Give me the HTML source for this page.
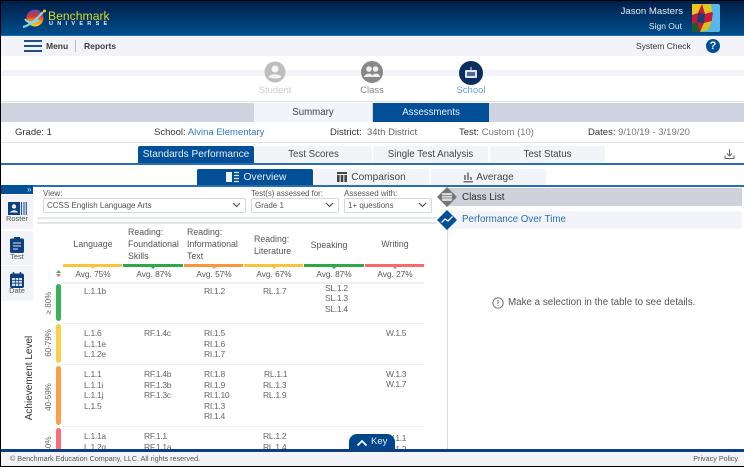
<!DOCTYPE html>
<html lang="en"><head><meta charset="utf-8"><title>Benchmark Universe</title>
<style>
html,body{margin:0;padding:0;background:#fff}
#p{position:relative;width:744px;height:467px;overflow:hidden;background:#fff;font-family:"Liberation Sans",sans-serif;font-size:9px;color:#444;filter:blur(.35px)}
#p div,#p svg{position:absolute}
.t{white-space:nowrap;line-height:12px;height:12px}
.c{text-align:center;transform:translateX(-50%)}
.s{font-size:8.5px;color:#666;letter-spacing:-.3px}
.tab{background:#f3f4fa;text-align:center;color:#444;font-size:9.7px;line-height:17px;border-radius:2px 2px 0 0}
.on{background:#004f97;color:#e8eef6}
.sel{background:#fff;border:1px solid #d5d7dc;border-radius:2px;height:13px;line-height:13px;font-size:8px;color:#555;padding-left:3px;box-sizing:content-box}
.side{left:1px;width:32px;background:#f3f4fa}
.bar{left:56px;width:5px;border-radius:2.5px}
.u{top:264px;height:2.5px;width:59px}
.sep{left:62px;width:362px;height:1px;background:#eef0f6}
.rot{font-size:8px;color:#666;letter-spacing:0}
</style></head><body><div id="p">

<!-- header -->
<div style="left:0;top:0;width:744px;height:36px;background:linear-gradient(#001d47,#00508f)"></div>
<div style="left:0;top:35px;width:744px;height:1px;background:#1c6cb4"></div>
<svg style="left:22px;top:7px" width="26" height="22" viewBox="0 0 26 22">
<defs><linearGradient id="pl" x1="0" y1="0" x2="0" y2="1"><stop offset="0" stop-color="#5a4fa8"/><stop offset=".4" stop-color="#d8362e"/><stop offset=".7" stop-color="#f29a1e"/><stop offset="1" stop-color="#f5d020"/></linearGradient></defs>
<circle cx="13" cy="11" r="8.5" fill="url(#pl)"/>
<path d="M1 20C6 19 13 14 21 5" stroke="#7fd0ee" stroke-width="2.4" fill="none"/>
<path d="M3 12C6 17 12 16 17 13" stroke="#8fd8ee" stroke-width="1.8" fill="none"/>
<circle cx="22.5" cy="4" r="1.5" fill="#f5d020"/>
</svg>
<div class="t" style="left:48px;top:9px;font-size:12.2px;color:#dcd41e;line-height:14px">Benchmark</div>
<div class="t" style="left:49px;top:18px;font-size:5.5px;font-weight:bold;color:#e8eef4;letter-spacing:4.3px">UNIVERSE</div>

<div class="t" style="right:61px;top:6px;font-size:9.6px;color:#e6edf5">Jason Masters</div>
<div class="t" style="right:62px;top:20px;font-size:8.5px;color:#dfe7f1">Sign Out</div>
<svg style="left:692px;top:4px" width="28" height="28" viewBox="0 0 28 28">
<rect width="28" height="28" rx="2" fill="#58b7ea"/>
<path d="M0 0H17L21 10 17 24 8 28H0Z" fill="#c8183c"/>
<path d="M0 0H10L6 9 0 11Z" fill="#e8c81c"/>
<path d="M10 0H19L20 8 13 10Z" fill="#e3c61d"/>
<path d="M6 9 13 10 12 19 5 18Z" fill="#1c3f6e"/>
<path d="M13 10 20 8 20 17 12 19Z" fill="#c8183c"/>
<path d="M0 20 5 18 8 28H0Z" fill="#1f5a2c"/>
<path d="M12 19 20 17 16 26 8 28Z" fill="#d8c21a"/>
</svg>

<!-- nav -->
<div style="left:0;top:36px;width:744px;height:20px;background:#f3f4fa"></div>
<div style="left:24px;top:40px;width:18px;height:2px;background:#1b4f8f"></div>
<div style="left:24px;top:45px;width:18px;height:2px;background:#1b4f8f"></div>
<div style="left:24px;top:50px;width:18px;height:2px;background:#1b4f8f"></div>
<div class="t" style="left:46px;top:40px;font-size:8.5px;color:#3a3a3a;font-weight:bold">Menu</div>
<div style="left:75px;top:40px;width:1px;height:12px;background:#bbb"></div>
<div class="t" style="left:84px;top:40px;font-size:8.5px;color:#3a3a3a;font-weight:bold">Reports</div>
<div class="t" style="left:636px;top:40px;font-size:8.5px;color:#333">System Check</div>
<div style="left:706px;top:39px;width:14px;height:14px;border-radius:50%;background:#004f97;color:#fff;font-size:11px;font-weight:bold;line-height:14px;text-align:center">?</div>

<!-- stepper -->
<div style="left:0;top:70px;width:744px;height:6px;background:#f3f4fa"></div>
<svg style="left:264px;top:61px" width="22" height="22" viewBox="0 0 22 22"><circle cx="11" cy="11" r="10.5" fill="#bdbdbd"/><circle cx="11" cy="8" r="3.5" fill="#f4f4f4"/><path d="M4.5 16C5.5 12.5 16.5 12.5 17.5 16 15 18 7 18 4.5 16Z" fill="#f4f4f4"/></svg>
<div class="t c" style="left:275px;top:85px;color:#ccc;font-size:9.5px">Student</div>
<svg style="left:361px;top:61px" width="22" height="22" viewBox="0 0 22 22"><circle cx="11" cy="11" r="11" fill="#888"/><circle cx="8" cy="8" r="2.8" fill="#eee"/><circle cx="14.5" cy="8" r="2.8" fill="#eee"/><path d="M3 16C4 11.5 12 11.5 12 16Z" fill="#eee"/><path d="M11 16C11 11.5 19 11.5 19 16Z" fill="#eee"/></svg>
<div class="t c" style="left:372px;top:85px;color:#888;font-size:9.5px">Class</div>
<svg style="left:459px;top:61px" width="24" height="24" viewBox="0 0 24 24"><circle cx="12" cy="12" r="12" fill="#0a2f5f"/><rect x="6" y="9" width="12" height="8" rx="1" fill="#dfe6f0"/><rect x="8" y="11" width="8" height="4" fill="#4d6c94"/><path d="M12 9V6" stroke="#dfe6f0" stroke-width="1"/></svg>
<div class="t c" style="left:471px;top:85px;color:#6fa3d4;font-size:9.5px">School</div>
<div style="left:0;top:101px;width:744px;height:1px;background:#dcdfe4"></div>

<!-- summary bar -->
<div style="left:0;top:103px;width:744px;height:19px;background:#cdd4df"></div>
<div class="tab" style="left:254px;top:103px;width:118px;height:19px;line-height:19px;border-radius:0">Summary</div>
<div class="tab on" style="left:373px;top:103px;width:116px;height:19px;line-height:19px;border-radius:0">Assessments</div>

<!-- info -->
<div class="t" style="left:15px;top:127px;font-size:9.5px;color:#333">Grade: 1</div>
<div class="t" style="left:154px;top:127px;font-size:9.5px;color:#333">School: <span style="color:#2f79bd">Alvina Elementary</span></div>
<div class="t" style="left:330px;top:127px;font-size:9.5px;color:#333">District: <span style="color:#666">&nbsp;34th District</span></div>
<div class="t" style="left:459px;top:127px;font-size:9.5px;color:#333">Test: <span style="color:#777">Custom (10)</span></div>
<div class="t" style="left:588px;top:127px;font-size:9.5px;color:#333">Dates: <span style="color:#777">9/10/19 - 3/19/20</span></div>
<div style="left:0;top:142px;width:744px;height:1px;background:#dfe3e8"></div>

<!-- tabs -->
<div class="tab on" style="left:138px;top:146px;width:116px;height:17px;font-size:10.1px">Standards Performance</div>
<div class="tab" style="left:255px;top:146px;width:117px;height:17px">Test Scores</div>
<div class="tab" style="left:373px;top:146px;width:115px;height:17px">Single Test Analysis</div>
<div class="tab" style="left:490px;top:146px;width:115px;height:17px">Test Status</div>
<svg style="left:723px;top:148px" width="13" height="13" viewBox="0 0 13 13" fill="none" stroke="#666" stroke-width="1"><path d="M6.5 1V8M4 5.5 6.5 8 9 5.5M2 7.5V10.5H11V7.5"/></svg>
<div style="left:0;top:163px;width:744px;height:1.5px;background:#2a70b0"></div>

<!-- subtabs -->
<div class="tab on" style="left:197px;top:169px;width:116px;height:16px;font-size:10.3px"><span style="margin-left:20px">Overview</span></div>
<div class="tab" style="left:314px;top:169px;width:115px;height:16px;font-size:10.1px"><span style="margin-left:14px">Comparison</span></div>
<div class="tab" style="left:431px;top:169px;width:115px;height:16px;font-size:10.1px"><span style="margin-left:13px">Average</span></div>
<svg style="left:225px;top:171px" width="16" height="12" viewBox="0 0 16 12"><rect x="1" y="1" width="6" height="10" fill="#eef2f8"/><path d="M9 1.5H14M9 4.5H14M9 7.5H14M9 10.5H14" stroke="#dfe7f1" stroke-width="1.2"/></svg>
<svg style="left:336px;top:171px" width="12" height="12" viewBox="0 0 12 12"><rect x="1" y="1" width="10" height="2" fill="#444"/><rect x="1" y="4" width="2.6" height="7" fill="#444"/><rect x="4.7" y="4" width="2.6" height="7" fill="#444"/><rect x="8.4" y="4" width="2.6" height="7" fill="#444"/></svg>
<svg style="left:463px;top:171px" width="11" height="12" viewBox="0 0 11 12"><path d="M2 4V9M5 1.5V9M8 6V9M0.5 10.8H10" stroke="#444" stroke-width="1.2"/></svg>
<div style="left:0;top:185px;width:744px;height:1.5px;background:#2a70b0"></div>

<!-- sidebar -->
<div style="left:1px;top:185px;width:32px;height:9px;background:#004f97"></div>
<div class="t" style="left:27px;top:184px;color:#cfe0f2;font-size:8px">»</div>
<div class="side" style="top:195px;height:34px"></div>
<svg style="left:8px;top:202px" width="19" height="13" viewBox="0 0 19 13"><rect width="12" height="13" fill="#0c3f7d"/><circle cx="6" cy="4.5" r="2.2" fill="#e8eef6"/><path d="M2 10.5C3 7.5 9 7.5 10 10.5Z" fill="#e8eef6"/><path d="M13.5 0V13M16 0V13M18.3 0V13" stroke="#2a5e9e" stroke-width="1.2"/></svg>
<div class="t c" style="left:17px;top:213px;font-size:7.5px;color:#555">Roster</div>
<div class="side" style="top:231px;height:34px"></div>
<svg style="left:10px;top:237px" width="14" height="16" viewBox="0 0 14 16"><rect y="1.5" width="14" height="14.5" rx="1.5" fill="#0c3f7d"/><rect x="4" width="6" height="3" fill="#0c3f7d"/><path d="M3 6H11M3 9H11M3 12H8" stroke="#dfe7f1" stroke-width="1.1"/></svg>
<div class="t c" style="left:17px;top:251px;font-size:7.5px;color:#555">Test</div>
<div class="side" style="top:266px;height:35px"></div>
<svg style="left:10px;top:272px" width="14" height="16" viewBox="0 0 14 16"><rect y="1.5" width="14" height="14.5" rx="2" fill="#0c3f7d"/><path d="M3.5 0V3M10.5 0V3" stroke="#0c3f7d" stroke-width="1.4"/><rect x="2" y="6" width="10" height="8" fill="#d8e2ef"/><path d="M2 8.5H12M2 11.2H12M5.3 6V14M8.7 6V14" stroke="#0c3f7d" stroke-width=".8"/></svg>
<div class="t c" style="left:17px;top:285px;font-size:7.5px;color:#555">Date</div>

<!-- filters -->
<div class="t" style="left:43px;top:188px;font-size:8px;color:#555">View:</div>
<div class="t" style="left:251px;top:188px;font-size:7.8px;color:#555">Test(s) assessed for:</div>
<div class="t" style="left:344px;top:188px;font-size:8px;color:#555">Assessed with:</div>
<div class="sel" style="left:43px;top:198px;width:198px">CCSS English Language Arts</div>
<div class="sel" style="left:251px;top:198px;width:83px">Grade 1</div>
<div class="sel" style="left:344px;top:198px;width:83px">1+ questions</div>
<svg style="left:232px;top:202px" width="9" height="6" viewBox="0 0 9 6"><path d="M1 1 4.5 4.5 8 1" stroke="#555" stroke-width="1.2" fill="none"/></svg>
<svg style="left:325px;top:202px" width="9" height="6" viewBox="0 0 9 6"><path d="M1 1 4.5 4.5 8 1" stroke="#555" stroke-width="1.2" fill="none"/></svg>
<svg style="left:418px;top:202px" width="9" height="6" viewBox="0 0 9 6"><path d="M1 1 4.5 4.5 8 1" stroke="#555" stroke-width="1.2" fill="none"/></svg>
<div style="left:37px;top:217px;width:400px;height:1.5px;background:#e3e6ec"></div>
<div style="left:37px;top:222px;width:400px;height:1.5px;background:#e3e6ec"></div>

<!-- right panel -->
<div style="left:447px;top:188px;width:295px;height:18px;background:#cdd2db"></div>
<div style="left:447px;top:211px;width:295px;height:18px;background:#f3f4fa"></div>
<div style="left:447px;top:229px;width:1px;height:221px;background:#d5dcea"></div>
<svg style="left:437px;top:187px" width="20" height="20" viewBox="0 0 20 20"><path d="M10 0 20 10 10 20 0 10Z" fill="#777"/><rect x="5" y="6" width="10" height="8" rx="1" fill="#d8dae0"/><path d="M5 8.5H15M5 11H15" stroke="#777" stroke-width=".7"/></svg>
<svg style="left:437px;top:210px" width="20" height="20" viewBox="0 0 20 20"><path d="M10 0 20 10 10 20 0 10Z" fill="#004f97"/><path d="M4.5 12.5 8 9 11 11 15.5 6.5" stroke="#fff" stroke-width="1.3" fill="none"/></svg>
<div class="t" style="left:462px;top:192px;font-size:9.8px;color:#2c2c2c">Class List</div>
<div class="t" style="left:462px;top:214px;font-size:9.8px;color:#2670b3">Performance Over Time</div>
<svg style="left:492px;top:297px" width="12" height="12" viewBox="0 0 12 12"><circle cx="6" cy="6" r="5.2" fill="none" stroke="#666" stroke-width=".9"/><path d="M6 3V6.8M6 8V9" stroke="#666" stroke-width="1"/></svg>
<div class="t" style="left:508px;top:297px;font-size:9.8px;color:#555">Make a selection in the table to see details.</div>

<!-- table headers -->
<div class="t c" style="left:93px;top:238px;font-size:8.8px;color:#555">Language</div>
<div class="t" style="left:128px;top:226px;font-size:8.8px;color:#555">Reading:</div>
<div class="t" style="left:128px;top:238px;font-size:8.8px;color:#555">Foundational</div>
<div class="t" style="left:128px;top:250px;font-size:8.8px;color:#555">Skills</div>
<div class="t" style="left:187px;top:226px;font-size:8.8px;color:#555">Reading:</div>
<div class="t" style="left:187px;top:238px;font-size:8.8px;color:#555">Informational</div>
<div class="t" style="left:187px;top:250px;font-size:8.8px;color:#555">Text</div>
<div class="t" style="left:254px;top:233px;font-size:8.8px;color:#555">Reading:</div>
<div class="t" style="left:254px;top:245px;font-size:8.8px;color:#555">Literature</div>
<div class="t c" style="left:329px;top:239px;font-size:8.8px;color:#555">Speaking</div>
<div class="t c" style="left:395px;top:238px;font-size:8.8px;color:#555">Writing</div>

<div class="u" style="left:63px;background:#f9c33c"></div>
<div class="u" style="left:123px;background:#2fa84a;width:60px"></div>
<div class="u" style="left:184px;background:#f9953f"></div>
<div class="u" style="left:244px;background:#f9c33c"></div>
<div class="u" style="left:304px;background:#2fa84a;width:60px"></div>
<div class="u" style="left:365px;background:#f56a6e"></div>
<svg style="left:63px;top:266px" width="362" height="4" viewBox="0 0 362 4"><path d="M27 0H33L30 3Z" fill="#f9c33c"/><path d="M87 0H93L90 3Z" fill="#2fa84a"/><path d="M148 0H154L151 3Z" fill="#f9953f"/><path d="M208 0H214L211 3Z" fill="#f9c33c"/><path d="M268 0H274L271 3Z" fill="#2fa84a"/><path d="M329 0H335L332 3Z" fill="#f56a6e"/></svg>

<svg style="left:56px;top:270px" width="5" height="7" viewBox="0 0 5 7"><path d="M2.5 0 5 3H0Z" fill="#3bb25a"/><path d="M0 4H5L2.5 7Z" fill="#f56a6e"/></svg>
<div class="t c" style="left:93px;top:268px;font-size:8.3px;color:#555">Avg. 75%</div>
<div class="t c" style="left:154px;top:268px;font-size:8.3px;color:#555">Avg. 87%</div>
<div class="t c" style="left:214px;top:268px;font-size:8.3px;color:#555">Avg. 57%</div>
<div class="t c" style="left:274px;top:268px;font-size:8.3px;color:#555">Avg. 67%</div>
<div class="t c" style="left:334px;top:268px;font-size:8.3px;color:#555">Avg. 87%</div>
<div class="t c" style="left:395px;top:268px;font-size:8.3px;color:#555">Avg. 27%</div>
<div class="sep" style="height:2px;top:282px"></div>
<div class="sep" style="top:323px"></div>
<div class="sep" style="top:364px"></div>
<div class="sep" style="top:426px"></div>

<!-- bars -->
<div class="bar" style="top:284px;height:37px;background:#3bb25a"></div>
<div class="bar" style="top:324px;height:39px;background:#fbcf45"></div>
<div class="bar" style="top:366px;height:59px;background:#fb9f4a"></div>
<div class="bar" style="top:428px;height:40px;background:#f5707a"></div>

<div class="t rot" style="left:49px;top:303px;transform:translate(-50%,-50%) rotate(-90deg)">≥ 80%</div>
<div class="t rot" style="left:49px;top:343px;transform:translate(-50%,-50%) rotate(-90deg)">60-79%</div>
<div class="t rot" style="left:49px;top:397px;transform:translate(-50%,-50%) rotate(-90deg)">40-59%</div>
<div class="t rot" style="left:49px;top:448px;transform:translate(-50%,-50%) rotate(-90deg)">&lt; 40%</div>
<div class="t" style="left:30px;top:378px;transform:translate(-50%,-50%) rotate(-90deg);font-size:10px;color:#333">Achievement Level</div>

<!-- cells -->
<div class="t s" style="left:84px;top:285px">L.1.1b</div>
<div class="t s" style="left:84px;top:327px">L.1.6</div>
<div class="t s" style="left:84px;top:338px">L.1.1e</div>
<div class="t s" style="left:84px;top:348px">L.1.2e</div>
<div class="t s" style="left:84px;top:368px">L.1.1</div>
<div class="t s" style="left:84px;top:379px">L.1.1i</div>
<div class="t s" style="left:84px;top:389px">L.1.1j</div>
<div class="t s" style="left:84px;top:400px">L.1.5</div>
<div class="t s" style="left:84px;top:430px">L.1.1a</div>
<div class="t s" style="left:84px;top:441px">L.1.2g</div>

<div class="t s" style="left:144px;top:327px">RF.1.4c</div>
<div class="t s" style="left:144px;top:368px">RF.1.4b</div>
<div class="t s" style="left:144px;top:379px">RF.1.3b</div>
<div class="t s" style="left:144px;top:389px">RF.1.3c</div>
<div class="t s" style="left:144px;top:430px">RF.1.1</div>
<div class="t s" style="left:144px;top:441px">RF.1.1a</div>

<div class="t s" style="left:204px;top:285px">RI.1.2</div>
<div class="t s" style="left:204px;top:327px">RI.1.5</div>
<div class="t s" style="left:204px;top:338px">RI.1.6</div>
<div class="t s" style="left:204px;top:348px">RI.1.7</div>
<div class="t s" style="left:204px;top:368px">RI.1.8</div>
<div class="t s" style="left:204px;top:379px">RI.1.9</div>
<div class="t s" style="left:204px;top:389px">RI.1.10</div>
<div class="t s" style="left:204px;top:400px">RI.1.3</div>
<div class="t s" style="left:204px;top:410px">RI.1.4</div>

<div class="t s" style="left:263px;top:285px">RL.1.7</div>
<div class="t s" style="left:264px;top:368px">RL.1.1</div>
<div class="t s" style="left:263px;top:379px">RL.1.3</div>
<div class="t s" style="left:263px;top:389px">RL.1.9</div>
<div class="t s" style="left:263px;top:430px">RL.1.2</div>
<div class="t s" style="left:263px;top:441px">RL.1.4</div>

<div class="t s" style="left:325px;top:282px">SL.1.2</div>
<div class="t s" style="left:325px;top:292px">SL.1.3</div>
<div class="t s" style="left:325px;top:303px">SL.1.4</div>

<div class="t s" style="left:386px;top:327px">W.1.5</div>
<div class="t s" style="left:386px;top:368px">W.1.3</div>
<div class="t s" style="left:386px;top:378px">W.1.7</div>
<div class="t s" style="left:386px;top:432px">W.1.1</div>
<div class="t s" style="left:386px;top:443px">W.1.2</div>

<!-- key -->
<div style="left:349px;top:434px;width:46px;height:16px;background:#00468c;border-radius:8px 8px 0 0"></div>
<svg style="left:356px;top:439px" width="12" height="8" viewBox="0 0 12 8"><path d="M1.5 6.5 6 2 10.5 6.5" stroke="#fff" stroke-width="1.8" fill="none"/></svg>
<div class="t" style="left:371px;top:436px;font-size:9.5px;color:#e6edf5">Key</div>

<!-- footer -->
<div style="left:0;top:449px;width:744px;height:17px;background:#f3f4fa"></div>
<div style="left:0;top:449px;width:744px;height:2.5px;background:#0d3f80"></div>
<div class="t" style="left:10px;top:453px;font-size:7.2px;color:#555">© Benchmark Education Company, LLC. All rights reserved.</div>
<div class="t" style="right:6px;top:453px;font-size:7.2px;color:#555">Privacy Policy</div>

<!-- frame -->
<div style="left:0;top:0;width:744px;height:1px;background:#000"></div>
<div style="left:0;top:0;width:1px;height:467px;background:#000"></div>
<div style="left:0;top:466px;width:744px;height:1px;background:#000"></div>
</div></body></html>
